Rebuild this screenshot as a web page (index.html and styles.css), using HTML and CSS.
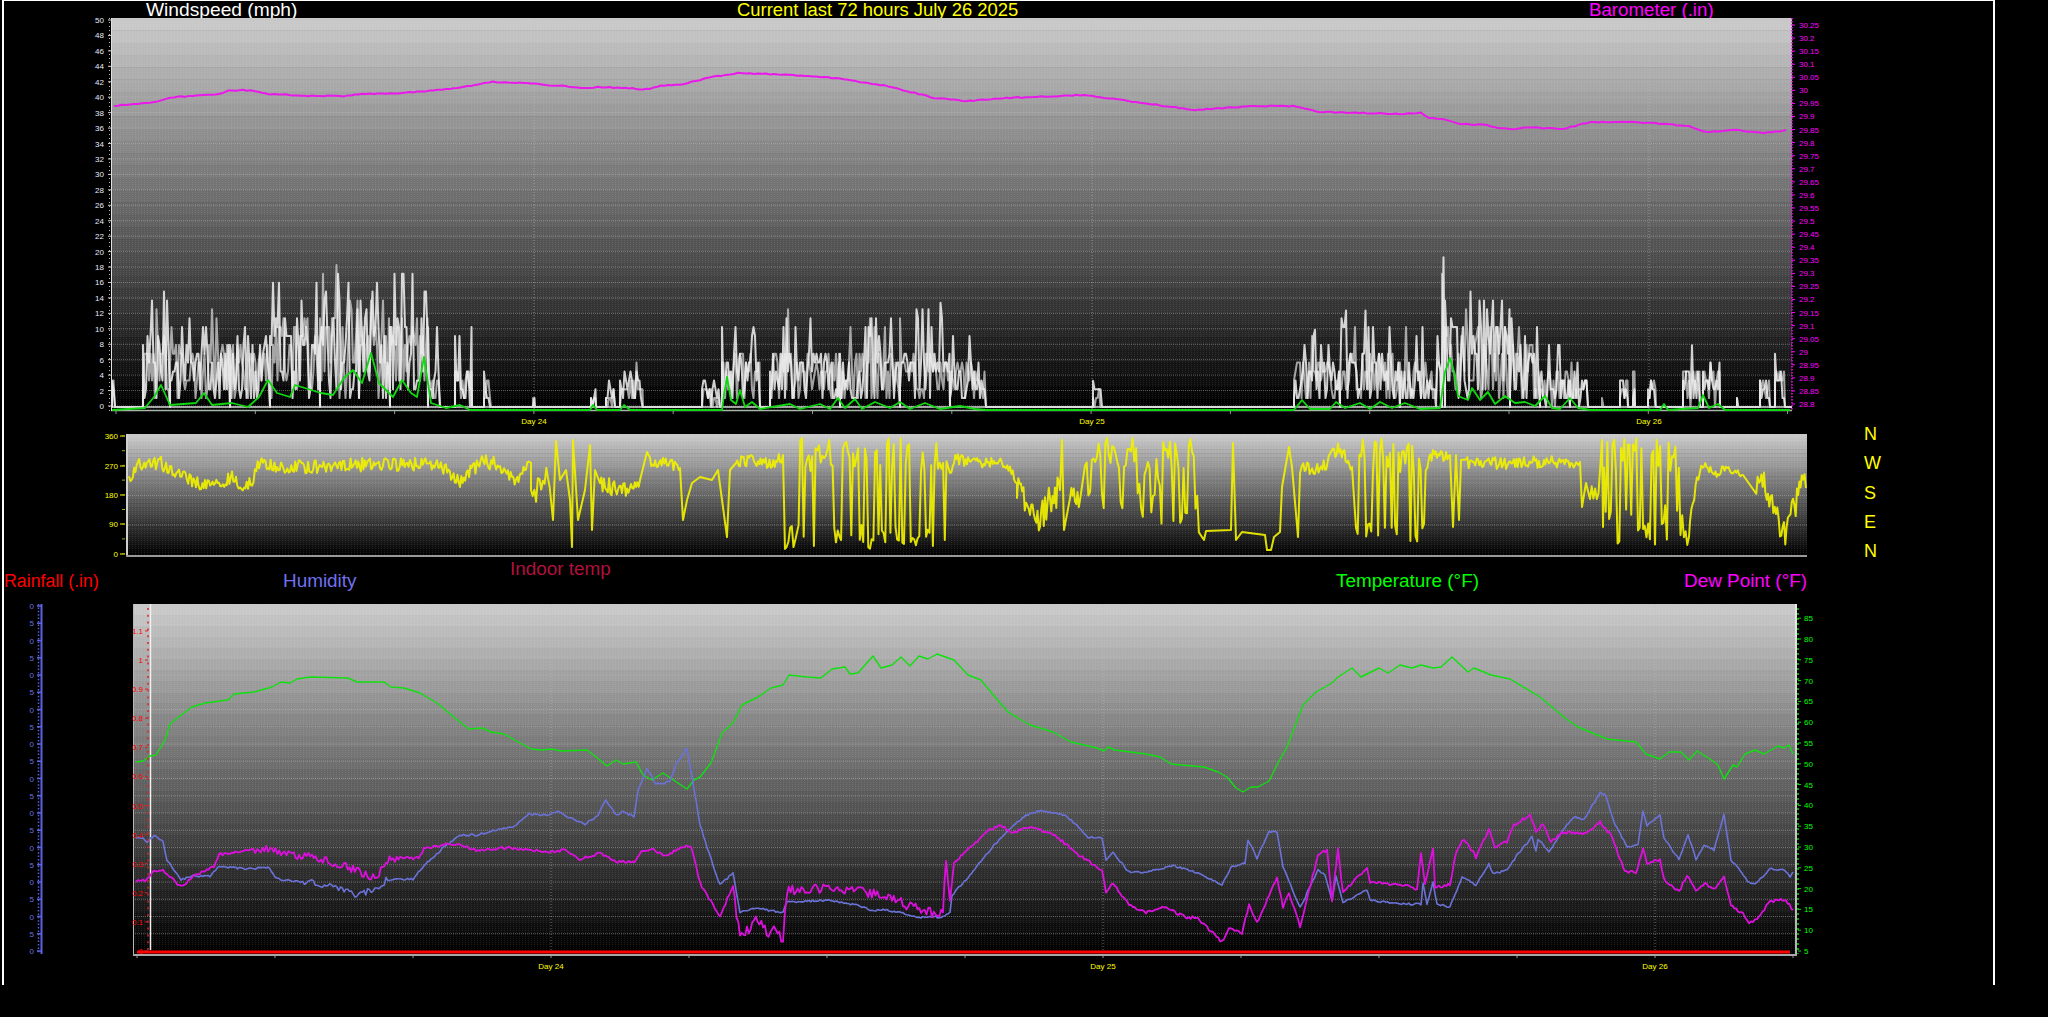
FILE: index.html
```html
<!DOCTYPE html>
<html lang="en">
<head>
    <meta charset="UTF-8">
    <title>Current last 72 hours July 26 2025</title>
    <link rel="stylesheet" href="styles.css">
</head>
<body>
    <div class="page">
        <div class="charts">
            <div class="title-row">
                <span class="title-wind white">Windspeed (mph)</span>
                <span class="title-main yellow">Current last 72 hours July 26 2025</span>
                <span class="title-baro magenta">Barometer (.in)</span>
            </div>

            <!-- one svg per chart, viewBox uses page coordinates -->
            <svg id="wind" class="chart" width="1848" height="409" viewBox="4 18 1848 409"></svg>
            <svg id="dir" class="chart" width="1848" height="131" viewBox="4 427 1848 131"></svg>

            <div class="legend-row">
                <span class="legend rain">Rainfall (.in)</span>
                <span class="legend humidity">Humidity</span>
                <span class="legend indoor">Indoor temp</span>
                <span class="legend green">Temperature (°F)</span>
                <span class="legend magenta">Dew Point (°F)</span>
            </div>

            <svg id="temp" class="chart" width="1848" height="381" viewBox="4 604 1848 381"></svg>
        </div>
        <div class="compass">
            <span>N</span>
            <span>W</span>
            <span>S</span>
            <span>E</span>
            <span>N</span>
        </div>
    </div>
    <script src="chart.js"></script>
</body>
</html>
```

FILE: styles.css
```css
body {
    margin: 0;
    background: #000;
    font-family: 'Liberation Sans', Arial, sans-serif;
}

.page {
    display: flex;
    width: 1989px;
    height: 984px;
    margin-left: 2px;
    border-top: 1px solid #fff;
    border-left: 2px solid #fff;
    border-right: 2px solid #fff;
}

.charts {
    width: 1848px;
}

.chart {
    display: block;
    overflow: visible;
}

.title-row {
    display: flex;
    height: 17px;
    padding-left: 142px;
    font-size: 18.4px;
    line-height: 18px;
    white-space: nowrap;
}

.title-wind {
    width: 591px;
    font-size: 19.2px;
}

.title-main {
    width: 852px;
}

.title-baro {
    font-size: 18.7px;
}

.legend-row {
    display: grid;
    grid-template-columns: 279px 227px 826px 348px 1fr;
    align-items: start;
    height: 46px;
    font-size: 18.9px;
    line-height: 20px;
    white-space: nowrap;
}

.legend {
    margin-top: 13px;
}

.legend.rain {
    font-size: 17.8px;
    color: #ff0000;
}

.legend.humidity {
    color: #7070f0;
}

.legend.indoor {
    margin-top: 1px;
    color: #b0103c;
}

.white { color: #fff; }
.yellow { color: #ffff00; }
.magenta { color: #ff00ff; }
.green { color: #00ff00; }

.compass {
    display: flex;
    flex-direction: column;
    margin-left: 12px;
    padding-top: 419px;
    font-size: 18px;
    line-height: 29.3px;
    color: #ffff00;
}

/* svg parts */
.tick {
    font-size: 8px;
    font-family: 'Liberation Sans', Arial, sans-serif;
}

.tick-white { fill: #e4ecff; }
.tick-yellow { fill: #ffff00; }
.tick-magenta { fill: #ff00ff; }
.tick-red { fill: #ff0000; }
.tick-blue { fill: #6a72e0; }
.tick-green { fill: #00ff00; }

.grid-h {
    stroke: #c0c0c0;
    stroke-width: 1;
    stroke-dasharray: 1 1;
    opacity: 0.45;
}

.grid-v {
    stroke: #c0c0c0;
    stroke-width: 1;
    stroke-dasharray: 1 2;
    opacity: 0.55;
}

.series {
    fill: none;
    stroke-linejoin: round;
}

.s-gust { stroke: #f2f2f2; stroke-width: 2; opacity: 0.85; }
.s-gust-under { stroke: #c8c8c8; stroke-width: 2; opacity: 0.8; }
.s-speed { stroke: #10d810; stroke-width: 1.8; }
.s-baro { stroke: #ea18ea; stroke-width: 2; }
.s-dir { stroke: #f0f000; stroke-width: 2; opacity: 0.92; }
.s-temp { stroke: #10e010; stroke-width: 1.4; }
.s-hum { stroke: #6a72d8; stroke-width: 1.6; }
.s-dew { stroke: #dc10dc; stroke-width: 1.8; }
```

FILE: chart.js
```js
const NS = 'http://www.w3.org/2000/svg';

// fixed seed, the picture has to come out the same every time
let seed = 20250726;
function rnd() {
    seed = (seed * 1664525 + 1013904223) % 4294967296;
    return seed / 4294967296;
}

function add(svg, tag, attrs, text) {
    const el = document.createElementNS(NS, tag);
    for (const key in attrs) el.setAttribute(key, attrs[key]);
    if (text !== undefined) el.textContent = text;
    svg.appendChild(el);
    return el;
}

function plotBackground(svg, id, x0, y0, x1, y1) {
    const bands = 32;
    const h = (y1 - y0) / bands;
    for (let i = 0; i < bands; i++) {
        const v = Math.round(200 * (1 - i / (bands - 1)));
        add(svg, 'rect', {
            x: x0, y: y0 + i * h, width: x1 - x0, height: h + 0.5,
            fill: `rgb(${v},${v},${v})`
        });
    }
    // dither dots of the gif
    const pattern = add(svg, 'pattern', { id: id, width: 3, height: 2, patternUnits: 'userSpaceOnUse' });
    add(pattern, 'rect', { x: 0, y: 0, width: 1, height: 1, fill: '#fff', opacity: 0.09 });
    add(svg, 'rect', { x: x0, y: y0, width: x1 - x0, height: y1 - y0, fill: `url(#${id})` });
}

function hLines(svg, x0, x1, ys) {
    ys.forEach(y => add(svg, 'line', { x1: x0, x2: x1, y1: y, y2: y, class: 'grid-h' }));
}

function vLines(svg, y0, y1, xs) {
    xs.forEach(x => add(svg, 'line', { x1: x, x2: x, y1: y0, y2: y1, class: 'grid-v' }));
}

function tickLabel(svg, x, y, text, color, anchor) {
    add(svg, 'text', { x: x, y: y + 3, class: 'tick tick-' + color, 'text-anchor': anchor || 'end' }, text);
}

function line(svg, x1, y1, x2, y2, color, width, dash) {
    const attrs = { x1: x1, y1: y1, x2: x2, y2: y2, stroke: color, 'stroke-width': width || 1 };
    if (dash) attrs['stroke-dasharray'] = dash;
    add(svg, 'line', attrs);
}

function polyline(svg, pts, cls) {
    add(svg, 'polyline', {
        points: pts.map(p => p[0].toFixed(1) + ',' + p[1].toFixed(1)).join(' '),
        class: 'series ' + cls
    });
}

// resample a trace and shake it, amp can depend on x
function shake(pts, step, amp) {
    const out = [];
    for (let i = 0; i < pts.length - 1; i++) {
        const a = pts[i], b = pts[i + 1];
        const n = Math.max(1, Math.round((b[0] - a[0]) / step));
        for (let j = 0; j < n; j++) {
            const x = a[0] + (b[0] - a[0]) * j / n;
            const y = a[1] + (b[1] - a[1]) * j / n;
            const k = typeof amp === 'function' ? amp(x) : amp;
            out.push([x, y + (rnd() - 0.5) * 2 * k]);
        }
    }
    out.push(pts[pts.length - 1]);
    return out;
}

/* ---------- windspeed + barometer ---------- */

const baroTrace = [[114,106],[134,104],[154,102],[174,97],[196,96],[219,94],[228,91],[243,90],[254,91],[266,94],[290,95],[312,96],[344,96],[362,94],[402,93],[429,91],[446,89],[464,87],[478,84],[493,82],[527,83],[549,85],[562,86],[585,88],[598,87],[629,88],[643,90],[661,86],[679,85],[700,80],[705,78],[738,73],[770,74],[836,78],[888,86],[934,98],[966,101],[1006,98],[1084,95],[1136,102],[1195,110],[1254,106],[1293,106],[1319,112],[1400,114],[1421,113],[1429,118],[1441,119],[1462,124],[1487,125],[1497,128],[1516,129],[1524,127],[1563,129],[1590,122],[1631,122],[1664,124],[1689,126],[1706,132],[1735,130],[1764,133],[1786,130]];

// [from x, to x, usual gust, highest gust]
const gustZones = [
    [112,115,3,4.5],[143,170,8,16],[170,230,7,13],[230,270,7,12],[270,320,10,17],[320,390,11.5,19.4],[390,428,10,18],[428,440,4,11],
    [455,472,4,11],[484,491,3,5],[533,535,1,1.5],[591,596,2,4],[606,615,2,4],[620,643,3,6],
    [702,720,2,4],[722,760,6,11],[770,840,6,13.5],[840,900,6,12],[900,950,6,13.5],[950,986,5,10],
    [1093,1102,2,3.4],[1294,1340,5,10],[1340,1400,6,12.5],[1400,1441,5,11],[1442,1445,19.4,19.4],
    [1445,1510,9,15],[1510,1540,7,12],[1540,1570,4,9],[1570,1588,3,6],[1602,1604,1.5,2],[1620,1628,3,4],
    [1633,1635,5,6],[1648,1656,3,4],[1683,1700,4,8],[1703,1720,4,6],[1737,1738,1.5,2],[1760,1770,3,5],[1775,1785,4,8]
];

const speedTrace = [[112,410],[145,408],[154,397],[161,385],[170,405],[196,403],[204,393],[212,405],[232,403],[248,407],[259,397],[268,380],[277,393],[290,397],[295,385],[321,393],[333,395],[344,378],[353,370],[362,383],[371,353],[379,383],[393,397],[402,380],[411,393],[417,397],[424,357],[431,403],[446,408],[460,405],[470,410],[590,410],[593,405],[597,410],[620,410],[624,405],[630,410],[722,410],[724,395],[727,377],[731,400],[736,404],[740,390],[745,407],[752,402],[760,409],[790,404],[800,409],[820,404],[830,409],[838,398],[845,408],[855,399],[862,409],[875,402],[890,408],[900,402],[910,409],[925,403],[940,409],[960,406],[975,409],[986,410],[1294,410],[1302,400],[1310,409],[1330,409],[1336,402],[1345,408],[1360,403],[1370,409],[1380,402],[1392,408],[1405,403],[1420,409],[1440,408],[1445,372],[1450,358],[1454,372],[1458,396],[1468,400],[1472,388],[1480,400],[1488,392],[1495,404],[1505,396],[1515,403],[1525,402],[1535,406],[1545,396],[1552,408],[1560,409],[1570,398],[1578,408],[1590,410],[1660,410],[1664,404],[1668,410],[1698,408],[1703,395],[1709,408],[1718,404],[1725,410],[1775,410],[1785,410],[1790,410]];

function gustLine(left, right, tall) {
    const gust = [[left, 407]];
    gustZones.forEach(z => {
        gust.push([z[0], 407]);
        for (let x = z[0]; x < z[1]; x += 1.5) {
            const r = rnd();
            let v;
            if (r < tall) v = z[3] * (0.78 + rnd() * 0.22);
            else if (r < 0.62) v = z[2] * (0.7 + rnd() * 0.5);
            else v = z[2] * (0.1 + rnd() * 0.45);
            v = Math.round(v / 1.15) * 1.15;
            gust.push([x, 407 - Math.min(v, z[3]) * 7.72]);
        }
        gust.push([z[1], 407]);
    });
    gust.push([right, 407]);
    return gust;
}

function drawWind() {
    const svg = document.getElementById('wind');
    const left = 111, right = 1792, top = 18, bottom = 411;
    plotBackground(svg, 'dots-wind', left, top, right, bottom);

    const ys = [];
    for (let i = 0; i <= 25; i++) ys.push(406 - 15.44 * i);
    hLines(svg, left, right, ys);

    const days = [534, 1092, 1649];
    vLines(svg, top, bottom, days);

    polyline(svg, gustLine(left, right, 0.02), 's-gust-under');
    polyline(svg, gustLine(left, right, 0.14), 's-gust');
    line(svg, left, 407, right, 407, '#d8d8d8', 1.5);
    line(svg, left, 410.5, right, 410.5, '#a8b8a8', 1.5);
    polyline(svg, speedTrace, 's-speed');
    polyline(svg, shake(baroTrace, 4, 0.5), 's-baro');

    // left edge and left axis
    line(svg, left + 0.5, top, left + 0.5, bottom, '#e0e0e0');
    line(svg, 109.5, top, 109.5, bottom, '#c0c0c0', 1, '1 3');
    for (let i = 0; i <= 25; i++) {
        tickLabel(svg, 104, 406 - 15.44 * i, String(i * 2), 'white');
        line(svg, 108, 406 - 15.44 * i, left, 406 - 15.44 * i, '#c8c8c8');
    }

    // right axis
    line(svg, right, top, right, bottom, '#ff00ff', 1.5, '1.5 1.5');
    const baro = ['30.25','30.2','30.15','30.1','30.05','30','29.95','29.9','29.85','29.8','29.75','29.7','29.65','29.6','29.55','29.5','29.45','29.4','29.35','29.3','29.25','29.2','29.15','29.1','29.05','29','28.95','28.9','28.85','28.8'];
    baro.forEach((t, i) => {
        const y = 25 + 13.07 * i;
        tickLabel(svg, 1799, y, t, 'magenta', 'start');
        line(svg, right, y, right + 3, y, '#ff00ff');
    });

    // bottom axis
    for (let i = 0; i < 13; i++) line(svg, 116 + 139.3 * i, bottom, 116 + 139.3 * i, bottom + 3, '#999');
    ['Day 24', 'Day 25', 'Day 26'].forEach((t, i) => tickLabel(svg, days[i], 421, t, 'yellow', 'middle'));
}

/* ---------- wind direction ---------- */

// low band with spikes up to the top, the wind swinging round north
function dirLow(x0, x1, low, spread, chance) {
    const out = [];
    let hold = 0;
    for (let x = x0; x < x1; x += 1.7) {
        if (hold === 0 && rnd() < chance) hold = 1 + Math.floor(rnd() * 3);
        let y;
        if (hold > 0) {
            y = 438 + rnd() * 34;
            hold--;
        } else {
            y = low + (rnd() - 0.5) * 2 * spread;
        }
        out.push([x, y]);
    }
    return out;
}

function dirTrace() {
    let pts = [];
    const put = more => { pts = pts.concat(more); };
    put(shake([[129,477],[143,462],[161,463],[179,475],[196,482],[219,485],[232,478],[248,487],[259,465],[290,467],[357,465],[437,463],[460,483],[482,460],[504,467],[516,480],[531,463]], 1.3, 7));
    put(dirLow(531, 550, 490, 12, 0.15));
    put([[553,520],[556,441],[560,480],[566,470],[570,500],[572,547],[573,440],[578,520],[585,490],[590,445],[592,530],[595,470]]);
    put(shake([[600,485],[622,490],[640,480]], 1.3, 9));
    put([[647,452]]);
    put(shake([[650,460],[680,468]], 1.3, 6));
    put([[683,520],[687,500],[692,483],[700,477],[712,480],[718,470],[727,537],[730,470]]);
    put(shake([[736,460],[776,463],[783,455]], 1.3, 6));
    put(dirLow(785, 948, 537, 12, 0.42));
    put(shake([[950,470],[954,460],[999,463],[1010,470],[1017,483]], 1.3, 6));
    put(shake([[1017,483],[1030,505],[1040,520],[1050,500],[1060,490]], 1.3, 16));
    put([[1062,440],[1064,530]]);
    put(shake([[1070,490],[1080,500]], 1.3, 10));
    put(dirLow(1085, 1200, 495, 40, 0.35));
    put([[1204,540],[1206,531],[1231,530],[1233,443],[1236,540],[1242,532],[1265,535],[1267,550],[1271,550],[1274,537],[1280,532],[1282,487],[1289,447],[1292,467],[1298,537],[1300,473]]);
    put(shake([[1302,470],[1325,467],[1338,447],[1352,467]], 1.3, 7));
    put(dirLow(1356, 1428, 535, 12, 0.42));
    put(shake([[1429,457],[1450,455]], 1.3, 7));
    put([[1453,527],[1456,455],[1459,520],[1461,460]]);
    put(shake([[1466,463],[1490,462],[1510,465],[1524,462],[1535,462],[1580,462]], 1.3, 6));
    put([[1582,507],[1586,483]]);
    put(dirLow(1590, 1600, 490, 10, 0.1));
    put([[1602,440],[1603,527]]);
    put(dirLow(1604, 1690, 525, 20, 0.35));
    put(shake([[1690,520],[1697,480],[1704,463],[1718,478],[1722,468],[1743,475]], 1.3, 4));
    put(shake([[1755,490],[1764,483],[1784,535],[1797,500],[1803,483],[1806,488]], 1.3, 14));
    return pts;
}

function drawDir() {
    const svg = document.getElementById('dir');
    const left = 126, right = 1807, top = 434, bottom = 557;
    plotBackground(svg, 'dots-dir', left, top, right, bottom);
    hLines(svg, left, right, [466, 495.5, 525]);
    line(svg, left + 1, top, left + 1, bottom, '#d0d0d0', 2);
    line(svg, left, bottom - 1, right, bottom - 1, '#989898', 2);
    polyline(svg, dirTrace(), 's-dir');

    [['360',436],['270',466],['180',495],['90',524],['0',554]].forEach(d => {
        tickLabel(svg, 118, d[1], d[0], 'yellow');
        line(svg, 120, d[1], 125, d[1], '#a8a800', 1.5);
    });
    for (let y = 436; y <= 554; y += 14.7) line(svg, 122, y, 125, y, '#a8a800');
}

/* ---------- temperature, humidity, dew point, rain ---------- */

const tempTrace = [[136,762],[143,761],[150,756],[156,755],[165,740],[170,724],[176,719],[192,707],[205,703],[228,700],[234,694],[254,692],[272,687],[281,682],[290,683],[297,679],[310,677],[348,678],[357,682],[384,682],[391,687],[404,688],[420,693],[437,703],[455,718],[469,729],[482,728],[491,732],[504,734],[531,749],[542,750],[551,749],[562,751],[587,750],[596,757],[607,766],[616,760],[623,764],[636,762],[643,775],[652,780],[663,773],[687,789],[694,780],[700,777],[711,763],[722,733],[733,723],[742,705],[758,697],[771,688],[783,685],[789,675],[807,677],[821,678],[832,669],[845,667],[850,674],[858,673],[873,656],[881,668],[892,665],[901,657],[910,666],[919,656],[928,659],[937,654],[954,660],[968,675],[981,680],[995,697],[1008,712],[1030,725],[1053,732],[1071,742],[1097,748],[1104,751],[1108,747],[1115,750],[1146,754],[1160,757],[1171,764],[1204,767],[1218,772],[1227,777],[1236,788],[1243,792],[1251,787],[1258,787],[1269,781],[1278,763],[1287,747],[1303,705],[1316,692],[1332,683],[1338,677],[1352,668],[1361,677],[1379,668],[1388,673],[1400,665],[1412,668],[1421,665],[1433,668],[1441,667],[1452,657],[1468,672],[1474,668],[1491,675],[1510,679],[1540,697],[1565,718],[1578,727],[1607,739],[1636,742],[1646,754],[1660,759],[1669,752],[1681,752],[1689,760],[1697,751],[1710,759],[1718,765],[1724,779],[1733,765],[1737,767],[1745,754],[1755,750],[1764,754],[1778,746],[1784,748],[1789,745],[1793,754]];

const humTrace = [[136,838],[143,838],[147,842],[154,835],[163,842],[167,860],[181,880],[192,876],[210,876],[219,867],[254,869],[268,867],[277,879],[308,882],[335,887],[355,895],[373,890],[379,890],[386,880],[413,879],[424,865],[442,849],[460,835],[478,835],[491,831],[513,827],[529,814],[545,815],[558,812],[585,824],[598,815],[606,800],[616,815],[623,812],[634,816],[638,790],[647,769],[656,784],[670,782],[676,764],[687,748],[696,800],[700,825],[707,847],[720,885],[733,873],[740,912],[756,908],[783,913],[787,902],[829,900],[856,905],[870,910],[887,910],[919,917],[943,917],[950,913],[952,895],[968,878],[990,850],[1008,830],[1026,815],[1039,811],[1066,815],[1088,837],[1102,838],[1106,860],[1113,853],[1129,872],[1146,872],[1173,866],[1196,872],[1222,885],[1231,867],[1245,863],[1248,840],[1257,858],[1269,832],[1277,832],[1283,867],[1300,908],[1318,870],[1325,875],[1332,900],[1336,877],[1343,903],[1367,890],[1370,900],[1400,904],[1421,904],[1423,884],[1427,904],[1433,882],[1437,904],[1450,907],[1462,877],[1476,885],[1489,864],[1493,874],[1507,870],[1518,854],[1532,837],[1536,850],[1538,839],[1549,852],[1565,827],[1574,817],[1584,819],[1600,793],[1605,794],[1615,824],[1627,847],[1638,845],[1643,812],[1647,825],[1660,815],[1664,839],[1679,859],[1688,835],[1696,859],[1704,845],[1714,850],[1724,815],[1731,860],[1739,869],[1749,883],[1757,883],[1770,869],[1784,870],[1790,876],[1793,872]];

const dewTrace = [[136,881],[145,881],[152,872],[163,870],[170,877],[181,887],[196,875],[214,867],[219,855],[237,851],[268,849],[281,854],[312,857],[330,862],[353,869],[371,877],[379,874],[386,860],[402,860],[417,860],[424,849],[446,844],[460,844],[478,851],[504,848],[549,852],[565,850],[580,859],[600,853],[616,862],[634,862],[641,852],[650,849],[667,856],[679,848],[691,846],[700,883],[720,917],[733,885],[740,938],[754,922],[783,938],[787,890],[834,887],[870,893],[892,900],[932,913],[943,912],[946,860],[950,900],[954,863],[968,850],[986,832],[999,825],[1012,832],[1035,827],[1057,837],[1079,855],[1102,870],[1106,892],[1113,883],[1129,905],[1146,912],[1164,907],[1187,918],[1196,917],[1222,942],[1229,927],[1242,933],[1249,905],[1257,923],[1269,895],[1277,877],[1283,907],[1289,892],[1300,927],[1318,855],[1327,850],[1332,900],[1338,848],[1343,893],[1367,867],[1370,883],[1400,884],[1417,889],[1421,854],[1425,884],[1433,849],[1435,887],[1450,885],[1456,852],[1464,839],[1476,857],[1489,829],[1495,847],[1507,842],[1514,825],[1530,815],[1536,832],[1543,824],[1551,842],[1563,832],[1586,834],[1600,822],[1611,835],[1625,872],[1636,872],[1643,849],[1647,864],[1660,859],[1664,879],[1679,892],[1687,875],[1696,890],[1705,883],[1714,890],[1724,876],[1731,905],[1743,914],[1749,922],[1757,920],[1770,901],[1786,900],[1793,910]];

// the dew trace is hairy on the first two afternoons
function dewNoise(x) {
    if (x > 250 && x < 420) return 4;
    if (x > 735 && x < 790) return 8;
    if (x > 790 && x < 945) return 5;
    return 1.5;
}

function humNoise(x) {
    if (x > 300 && x < 390) return 3;
    return 1;
}

function drawTemp() {
    const svg = document.getElementById('temp');
    const left = 133, right = 1797, top = 604, bottom = 956;
    plotBackground(svg, 'dots-temp', left, top, right, bottom);

    const ys = [];
    for (let i = 1; i <= 20; i++) ys.push(951 - 17.25 * i);
    hLines(svg, left, right, ys);

    const days = [551, 1103, 1655];
    vLines(svg, top, bottom, days);

    line(svg, left + 0.5, top, left + 0.5, bottom, '#b8b8b8');
    line(svg, 150.5, top, 150.5, 950, '#f0f0f0', 1.5);
    line(svg, 1796, top, 1796, bottom, '#f0f0f0', 1.5);
    line(svg, left, 955, right, 955, '#a8a8a8', 2);

    polyline(svg, tempTrace, 's-temp');
    polyline(svg, shake(humTrace, 1.8, humNoise), 's-hum');
    polyline(svg, shake(dewTrace, 1.8, dewNoise), 's-dew');
    line(svg, 137, 952, 1790, 952, '#ff0000', 3);

    // rain axis inside the plot
    line(svg, 148, top + 4, 148, 950, '#e02020', 1.5, '2 4.8');
    ['0','0.1','0.2','0.3','0.4','0.5','0.6','0.7','0.8','0.9','1','1.1'].forEach((t, i) => {
        const y = 951 - 29.1 * i;
        tickLabel(svg, 143, y, t, 'red');
        line(svg, 145, y, 148, y, '#e02020');
    });

    // humidity axis out on the left, only the last digit shows
    line(svg, 41.5, top, 41.5, 954, '#5a62e0', 2);
    line(svg, 38.5, top, 38.5, 954, '#5a62e0', 1.5, '1.5 1.9');
    for (let i = 0; i <= 20; i++) {
        const y = 951 - 17.25 * i;
        tickLabel(svg, 34, y, i % 2 ? '5' : '0', 'blue');
        line(svg, 37, y, 41, y, '#5a62e0', 1.5);
    }

    // temperature axis on the right
    line(svg, 1798, top + 4, 1798, 954, '#10d810', 1.5, '2 3');
    for (let i = 0; i <= 16; i++) {
        const y = 951 - 20.8 * i;
        tickLabel(svg, 1804, y, String(5 + i * 5), 'green', 'start');
        line(svg, 1798, y, 1801, y, '#10d810');
    }

    for (let i = 0; i < 13; i++) line(svg, 137 + 138 * i, bottom, 137 + 138 * i, bottom + 2, '#999');
    ['Day 24', 'Day 25', 'Day 26'].forEach((t, i) => tickLabel(svg, days[i], 966, t, 'yellow', 'middle'));
}

drawWind();
drawDir();
drawTemp();
```
